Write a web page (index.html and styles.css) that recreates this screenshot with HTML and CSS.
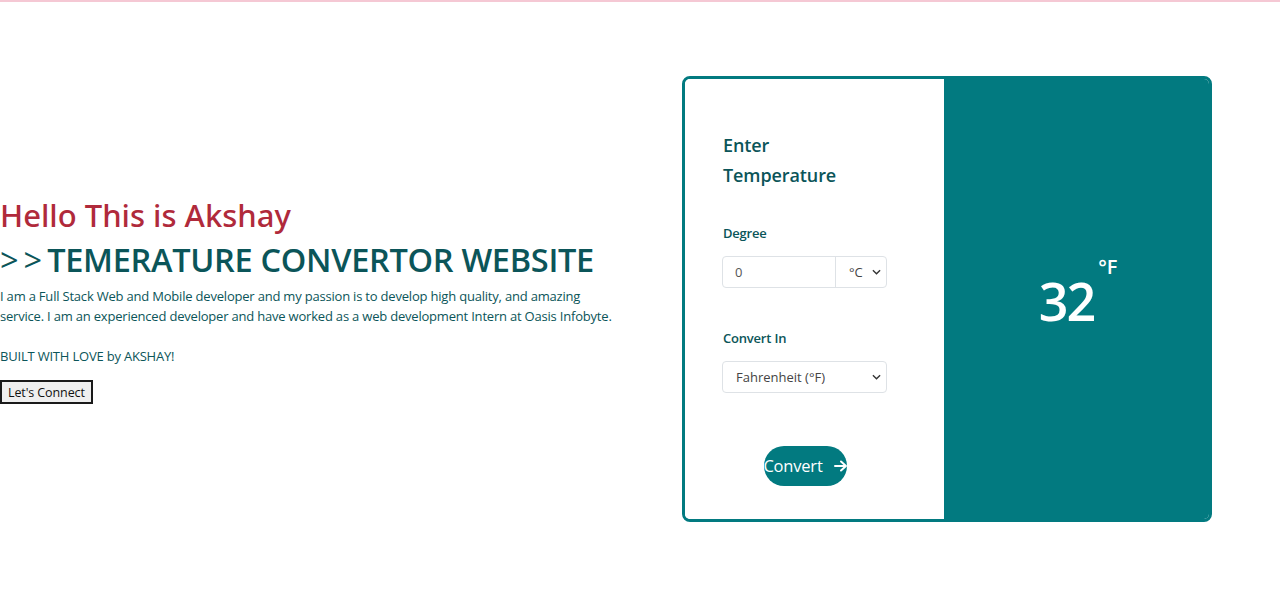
FILE: index.html
```html
<!DOCTYPE html>
<html lang="en">
<head>
<meta charset="utf-8">
<title>Temperature Convertor</title>
<link rel="stylesheet" href="styles.css">
</head>
<body>
<main class="page">
  <section class="intro">
    <h2 class="hello">Hello This is Akshay</h2>
    <h1 class="title"><span class="chevrons">&gt;&gt;</span>TEMERATURE CONVERTOR WEBSITE</h1>
    <p class="about">I am a Full Stack Web and Mobile developer and my passion is to develop high quality, and amazing service. I am an experienced developer and have worked as a web development Intern at Oasis Infobyte.</p>
    <p class="love">BUILT WITH LOVE by AKSHAY!</p>
    <button class="connect">Let's Connect</button>
  </section>
  <section class="card">
    <div class="form-side">
      <h3 class="form-title">Enter<br>Temperature</h3>
      <label class="label">Degree</label>
      <div class="input-group">
        <input class="degree" type="text" value="0">
        <div class="unit">°C
          <svg class="chev" viewBox="0 0 10 6" width="9" height="6"><path d="M1 1l4 4 4-4" fill="none" stroke="#333" stroke-width="1.5"/></svg>
        </div>
      </div>
      <label class="label label-convert">Convert In</label>
      <div class="select">Fahrenheit (°F)
        <svg class="chev" viewBox="0 0 10 6" width="9" height="6"><path d="M1 1l4 4 4-4" fill="none" stroke="#333" stroke-width="1.5"/></svg>
      </div>
      <div class="btn-row">
        <button class="convert"><span>Convert</span>
          <svg class="arrow" viewBox="0 0 14 12" width="14" height="12"><path d="M1 6h11M7 1.5l5 4.5-5 4.5" fill="none" stroke="#fff" stroke-width="2" stroke-linecap="round" stroke-linejoin="round"/></svg>
        </button>
      </div>
    </div>
    <div class="result-side">
      <div class="result"><span class="value">32</span><sup class="deg">°F</sup></div>
    </div>
  </section>
</main>
</body>
</html>
```
FILE: styles.css
```css
* { box-sizing: border-box; }
html, body { margin: 0; padding: 0; }
body {
  font-family: "Open Sans", "Noto Sans", sans-serif;
  background: #fff;
  border-top: 2px solid #f5c8d4;
}
.page {
  display: flex;
  align-items: center;
  height: 593px;
}
.intro {
  flex: 0 0 620px;
  margin-right: 62px;
  color: #0b5559;
}
.hello {
  margin: 0;
  font-family: "Noto Sans", "Open Sans", sans-serif;
  font-weight: 500;
  font-size: 31px;
  line-height: 40px;
  color: #b02a3b;
  letter-spacing: 0;
  padding-top: 1px;
}
.title {
  margin: 0;
  font-weight: 600;
  font-size: 32.5px;
  line-height: 50px;
  color: #0b5559;
  letter-spacing: -0.3px;
}
.chevrons {
  letter-spacing: 5px;
  font-weight: 500;
}
.about {
  margin: 1px 0 0;
  font-size: 13px;
  line-height: 20px;
  letter-spacing: -0.2px;
  width: 620px;
}
.love {
  margin: 20px 0 0;
  font-size: 13px;
  line-height: 20px;
  letter-spacing: -0.2px;
}
.connect {
  margin-top: 14px;
  font-family: inherit;
  font-size: 12.5px;
  padding: 2px 6px;
  line-height: 18px;
  height: 24px;
  background: #efefef;
  border: 2px solid #1a1a1a;
  border-radius: 0;
  color: #111;
  letter-spacing: -0.1px;
}
.card {
  flex: 0 0 530px;
  height: 446px;
  border: 3px solid #027a80;
  border-radius: 8px;
  display: flex;
  overflow: hidden;
}
.form-side {
  flex: 0 0 259px;
  background: #fff;
  padding: 51px 54px 0 37px;
  display: flex;
  flex-direction: column;
  color: #0b5559;
}
.form-title {
  margin: 0 0 0 1px;
  font-size: 18px;
  font-weight: 600;
  line-height: 30px;
  letter-spacing: -0.1px;
}
.label {
  margin: 33px 0 0 1px;
  font-size: 13px;
  font-weight: 600;
  line-height: 20px;
  letter-spacing: -0.2px;
}
.label-convert { margin-top: 40px; }
.input-group {
  margin-top: 13px;
  display: flex;
  width: 165px;
  height: 32px;
  border: 1px solid #dee2e6;
  border-radius: 4px;
}
.degree {
  width: 113px;
  border: 0;
  border-right: 1px solid #dee2e6;
  padding: 0 12px;
  font-family: inherit;
  font-size: 13px;
  color: #555;
  outline: none;
  background: transparent;
}
.unit, .select {
  display: flex;
  align-items: center;
  justify-content: space-between;
  font-size: 13px;
  color: #444;
}
.unit {
  flex: 1;
  padding: 0 5px 0 13px;
}
.select {
  margin-top: 13px;
  width: 165px;
  height: 32px;
  border: 1px solid #dee2e6;
  border-radius: 4px;
  padding: 0 5px 0 13px;
}
.btn-row {
  margin-top: 53px;
  width: 165px;
  display: flex;
  justify-content: center;
}
.convert {
  width: 83px;
  height: 40px;
  margin-left: 2px;
  padding: 0;
  border: 0;
  border-radius: 20px;
  background: #027a80;
  color: #fff;
  font-family: inherit;
  font-size: 16.5px;
  display: flex;
  align-items: center;
  justify-content: center;
  gap: 11px;
  white-space: nowrap;
  letter-spacing: -0.2px;
}
.convert span, .convert svg { flex: 0 0 auto; }
.result-side {
  flex: 1;
  background: #027a80;
  display: flex;
  align-items: center;
  justify-content: center;
}
.result {
  display: flex;
  align-items: flex-start;
  color: #fff;
  margin-left: 3px;
  margin-top: 4px;
}
.value {
  font-size: 52px;
  font-weight: 600;
  line-height: 60px;
  letter-spacing: -2px;
}
.deg {
  font-size: 20px;
  font-weight: 600;
  line-height: 20px;
  margin-left: 4px;
  margin-top: -14px;
  vertical-align: baseline;
}
```
